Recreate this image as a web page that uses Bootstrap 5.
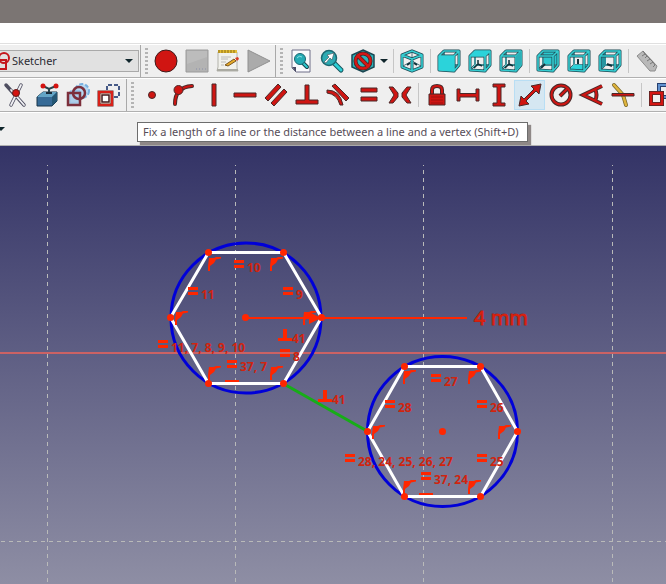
<!DOCTYPE html>
<html lang="en">
<head>
<meta charset="utf-8">
<meta name="viewport" content="width=device-width, initial-scale=1">
<title>Sketcher</title>
<link href="https://cdn.jsdelivr.net/npm/bootstrap@5.3.0/dist/css/bootstrap.min.css" rel="stylesheet">
<style>
body { font-family: "Noto Sans", sans-serif; font-size: 11px; background: #efefef; }
.title-strip { height: 23px; background: #7b7573; }
.menu-strip { height: 21px; border-bottom: 1px solid #e0e0e0; }
.tool-row { height: 34px; border-bottom: 1px solid #b0b0b0; border-top: 1px solid #fff; }
.tool-group { border-right: 1px solid #a9a9a9; margin-right: 1px; padding-right: 2px; }
.tool-group.tight { padding-right: 1px; }
.tool-group.open-end { border-right: 0; }
.grip { width: 3px; height: 26px; margin: 0 2px 0 3px; background: repeating-linear-gradient(#b4b4b4 0 2px, #efefef 2px 4px); }
.tool-btn { width: 31px; height: 30px; padding: 0; border: 1px solid transparent; border-radius: 0; background: none; }
.tool-btn svg { width: 24px; height: 24px; display: block; margin: 0 auto; overflow: visible; }
.tool-btn.hot, .tool-btn:hover { background: #d5e7f2; border-color: #b9def4; }
.menu-btn { width: 12px; height: 30px; padding: 0; border: 0; background: none; }
.sep { width: 1px; height: 24px; margin: 0 2px 0 3px; background: #c6c6c6; }
.caret { width: 8px; height: 4px; display: block; fill: #10262c; }
.bench { width: 139px; }
.bench select { height: 22px; padding: 0 20px 0 12px; border: 1px solid #a9a9a9; border-left: 0; background: #e1e1e1; color: #2b2b33; font-size: 11px; line-height: 18px; appearance: none; border-radius: 0; }
.bench .bench-icon { left: -8px; top: 2px; width: 18px; height: 18px; }
.bench .caret { right: 6px; top: 9px; }
.tip { left: 137px; top: 9px; height: 20px; line-height: 18px; padding: 0 8px 0 5px; border: 1px solid #6d6d6d; background: #fff; color: #574d58; box-shadow: 3px 3px 1px #8f8887; z-index: 2; }
.view3d { background: linear-gradient(#333366, #5f5f84 48%, #8e8ea4); min-height: 200px; }
.view3d > svg { display: block; width: 100%; height: 100%; min-height: 438px; }
.grid-line { stroke: #b9bab9; stroke-width: 1; stroke-dasharray: 4 4; fill: none; }
.notes { font: 700 12px "Noto Sans", sans-serif; fill: #d0240f; }
.dim-text { font: 400 20px "Noto Sans", sans-serif; fill: #d9220f; stroke: #b51d14; stroke-width: 1; paint-order: stroke; }
.red { fill: #cf1512; stroke: #4a2929; stroke-width: 1; stroke-linejoin: round; }
.out { fill: none; stroke: #4a2929; stroke-width: 4; }
.inn { fill: none; stroke: #cf1512; stroke-width: 2; }
</style>
<script src="https://cdn.jsdelivr.net/npm/bootstrap@5.3.0/dist/js/bootstrap.bundle.min.js"></script>
</head>
<body class="vh-100 d-flex flex-column overflow-hidden">
<svg width="0" height="0" class="position-absolute" aria-hidden="true">
  <defs>
    <path id="cubeBack" d="M7 16V2H22V16Z M2 21L7 16M16 21L22 16"/>
    <path id="cubeFront" d="M2 7H17V22L2 21ZM2 7L7 2H22L17 7M22 2V16L17 22"/>
    <g id="cubeFrameBack" fill="none"><use href="#cubeBack" stroke="#2a5560" stroke-width="2"/><use href="#cubeBack" stroke="#5fd0d3" stroke-width="1"/></g>
    <g id="cubeFrame" fill="none" stroke-linejoin="round"><use href="#cubeFront" stroke="#1f4a55" stroke-width="3"/><use href="#cubeFront" stroke="#35cdd1" stroke-width="1.600"/></g>
    <g id="axes" fill="none" stroke="#123038" stroke-width="1.5"><path d="M10 11V15L6 19M10 15L14 17"/></g>
    <g id="eq"><path d="M0 0H10V3H0ZM0 5H10V8H0Z"/></g>
    <g id="perp"><path d="M5 0H9V9H14V12H0V9H5Z"/></g>
    <g id="pt"><path d="M0 14V9L1 1L6 1L8 0H13V1.500L8 2.500L6 6L2 9V14Z"/></g>
    <path id="caretShape" d="M0 0H8L4 4Z"/>
  </defs>
</svg>

<header class="flex-shrink-0">
  <div class="title-strip"></div>
  <div class="menu-strip bg-white"></div>

  <div class="tool-row d-flex align-items-stretch overflow-hidden" role="toolbar" aria-label="File and view">
    <div class="tool-group tight d-flex align-items-center flex-shrink-0">
      <div class="bench position-relative">
        <select class="w-100 d-block" aria-label="Workbench"><option>Sketcher</option></select>
        <svg class="bench-icon position-absolute pe-none" viewBox="0 0 18 18" fill="none"><path d="M2 8H14V17H2Z" stroke="#c4161c" stroke-width="2"/><circle cx="12" cy="6" r="5" stroke="#c4161c" stroke-width="2"/></svg>
        <svg class="caret position-absolute pe-none" viewBox="0 0 8 4"><use href="#caretShape"/></svg>
      </div>
    </div>
    <div class="tool-group tight d-flex align-items-center flex-shrink-0">
      <div class="grip"></div>
      <button class="tool-btn" aria-label="Record macro"><svg viewBox="0 0 24 24"><circle cx="12" cy="12" r="11" fill="#d01512" stroke="#3c1c1c"/></svg></button>
      <button class="tool-btn" aria-label="Stop macro"><svg viewBox="0 0 24 24"><path d="M1 1H23V23H1Z" fill="#b3b3b3" stroke="#9a9a9a"/><path d="M2 15L22 8V2H2Z" fill="#bcbcbc"/><path d="M11 20H21" stroke="#8a8fa8" stroke-dasharray="1 2"/></svg></button>
      <button class="tool-btn" aria-label="Macros"><svg viewBox="0 0 24 24"><path d="M2 3H21V19L22 22H1L2 18Z" fill="#f1f1ec" stroke="#b2b2aa"/><path d="M1 20H22V22H1Z" fill="#aaaaa2"/><path d="M2 1H21V4H2Z" fill="#e3bd35"/><path d="M3 1V4M6 1V4M9 1V4M12 1V4M15 1V4M18 1V4" stroke="#8c6c12"/><path d="M5 8H15M5 10H12M5 13H10M5 16H8" stroke="#babab8"/><path d="M9 16L18 10L20 12L12 17Z" fill="#e7ab28" stroke="#7b5620"/><path d="M19 9L22 8L23 10L21 12Z" fill="#d93a24"/></svg></button>
      <button class="tool-btn" aria-label="Run macro"><svg viewBox="0 0 24 24"><path d="M1 1L23 12L1 23Z" fill="#ababab" stroke="#909090"/></svg></button>
    </div>
    <div class="tool-group open-end d-flex align-items-center flex-shrink-0">
      <div class="grip"></div>
      <button class="tool-btn" aria-label="Fit all"><svg viewBox="0 0 24 24"><path d="M3 1H21V23H7L3 19Z" fill="#fafafd" stroke="#6e6e88"/><path d="M3 18H7V23Z" fill="#4a4a62"/><path d="M13 13L18 18" stroke="#17444d" stroke-width="4" stroke-linecap="round"/><path d="M13 13L18 18" stroke="#2fc9cf" stroke-width="2" stroke-linecap="round"/><circle cx="11" cy="10" r="5.500" fill="#25abb5" stroke="#1b6771"/><path d="M8 9Q10 6 13 8" stroke="#8ce0e4" fill="none"/></svg></button>
      <button class="tool-btn" aria-label="Fit selection"><svg viewBox="0 0 24 24"><path d="M14 14L21 21" stroke="#17545c" stroke-width="5" stroke-linecap="round"/><path d="M14 14L21 21" stroke="#2fd0d6" stroke-width="3" stroke-linecap="round"/><circle cx="9" cy="9" r="7.500" fill="#2cabb3" stroke="#1b6771" stroke-width="1.500"/><path d="M4 13L9 8L7 6L14 4L12 11L10 9L6 14Z" fill="#fff" stroke="#4e6069" stroke-width=".7"/></svg></button>
      <button class="tool-btn" aria-label="Draw style"><svg viewBox="0 0 24 24"><path d="M12 1L23 6V18L12 23L1 18V6Z" fill="#2bb3ba" stroke="#1b4752" stroke-width="1.500"/><circle cx="12" cy="12" r="7.500" fill="none" stroke="#472323" stroke-width="4"/><path d="M7 7L17 17" stroke="#472323" stroke-width="4"/><circle cx="12" cy="12" r="7.500" fill="none" stroke="#d41716" stroke-width="2.500"/><path d="M7 7L17 17" stroke="#d41716" stroke-width="2.500"/></svg></button>
      <button class="menu-btn" aria-label="Draw style menu"><svg class="caret mx-auto" viewBox="0 0 8 4"><use href="#caretShape"/></svg></button>
      <div class="sep"></div>
      <button class="tool-btn" aria-label="Axonometric view"><svg viewBox="0 0 24 24" fill="none" stroke-linejoin="round"><path d="M12 12V2M12 12L3 17M12 12L21 17" stroke="#4b7a84" stroke-width="1"/><path d="M12 2L22 6V18L12 22L2 18V6ZM2 6L12 10L22 6M12 10V22" stroke="#1f4a55" stroke-width="3"/><path d="M12 2L22 6V18L12 22L2 18V6ZM2 6L12 10L22 6M12 10V22" stroke="#35cdd1" stroke-width="1.600"/><path d="M7 16L10 14M14 14L17 16" stroke="#123038" stroke-width="2"/></svg></button>
      <div class="sep"></div>
      <button class="tool-btn" aria-label="Front view"><svg viewBox="0 0 24 24"><use href="#cubeFrameBack"/><use href="#cubeFrame"/><path d="M2 7H17V22L2 21Z" fill="#2bd3da"/></svg></button>
      <button class="tool-btn" aria-label="Top view"><svg viewBox="0 0 24 24"><use href="#cubeFrameBack"/><use href="#cubeFrame"/><path d="M2 7L7 2H22L17 7Z" fill="#2bd3da"/><use href="#axes"/></svg></button>
      <button class="tool-btn" aria-label="Right view"><svg viewBox="0 0 24 24"><use href="#cubeFrameBack"/><use href="#cubeFrame"/><path d="M17 7L22 2V16L17 22Z" fill="#2bb0b8"/><use href="#axes"/></svg></button>
      <div class="sep"></div>
      <button class="tool-btn" aria-label="Rear view"><svg viewBox="0 0 24 24"><path d="M7 2H22V16H7Z" fill="#2bc8cf"/><use href="#cubeFrameBack"/><path d="M5 19L9 15" stroke="#123038" stroke-width="2"/><use href="#cubeFrame"/></svg></button>
      <button class="tool-btn" aria-label="Bottom view"><svg viewBox="0 0 24 24"><use href="#cubeFrameBack"/><path d="M2 21L7 16H22L17 22Z" fill="#2bd3da"/><path d="M11 10V15" stroke="#123038" stroke-width="2"/><use href="#cubeFrame"/></svg></button>
      <button class="tool-btn" aria-label="Left view"><svg viewBox="0 0 24 24"><use href="#cubeFrameBack"/><path d="M2 8L8 3V16L2 21Z" fill="#2594a0"/><path d="M9 15L14 17" stroke="#123038" stroke-width="2"/><use href="#cubeFrame"/></svg></button>
      <div class="sep"></div>
      <button class="tool-btn" aria-label="Measure distance"><svg viewBox="0 0 24 24"><path d="M2 7L8 2L22 17L20 22H15Z" fill="#b9b9b9" stroke="#8d8d8d"/><path d="M8 2L10 5L7 7M10 5L12 7L10 9M12 7L15 10L12 12M15 10L18 13L15 15M18 13L20 16L18 18" stroke="#777" fill="none"/></svg></button>
    </div>
  </div>

  <div class="tool-row d-flex align-items-stretch overflow-hidden" role="toolbar" aria-label="Sketcher tools">
    <div class="tool-group d-flex align-items-center flex-shrink-0">
      <button class="tool-btn" aria-label="Trim edge"><svg viewBox="0 0 24 24"><path d="M2 2L20 22M17 2L7 22" stroke="#4e4e60" stroke-width="3.500" stroke-linecap="round"/><path d="M7 7L20 22M17 2L7 22" stroke="#f1f1f4" stroke-width="1.800" stroke-linecap="round"/><circle cx="12" cy="10" r="3.500" fill="#d41310" stroke="#601c1c"/></svg></button>
      <button class="tool-btn" aria-label="External geometry"><svg viewBox="0 0 24 24"><path d="M2 14L8 9H22V18L17 23H2Z" fill="#376b97" stroke="#193549"/><path d="M2 14L8 9H22L17 14Z" fill="#63a5c6"/><path d="M17 14L22 9V18L17 23Z" fill="#245774"/><path d="M8 3L14 6L21 3M14 6V11" stroke="#28444c" stroke-width="2" fill="none"/><circle cx="8" cy="3" r="2.500" fill="#d41310"/><circle cx="21" cy="3" r="2.500" fill="#d41310"/><path d="M11 10H17" stroke="#182a38" stroke-width="2"/></svg></button>
      <button class="tool-btn" aria-label="Carbon copy"><svg viewBox="0 0 24 24"><circle cx="16" cy="8" r="7" fill="#b6d8f2" stroke="#79b1e0" stroke-width="2" stroke-dasharray="4 2"/><path d="M4 8H14V20H4Z" fill="#b6d8f2" stroke="#79b1e0"/><path d="M2 10H14V22H2Z" fill="#a9cbe6" fill-opacity=".7" stroke="#7c2f3b" stroke-width="2.500"/><circle cx="13" cy="10" r="6" fill="none" stroke="#7c2f3b" stroke-width="2.500"/></svg></button>
      <button class="tool-btn" aria-label="Construction mode"><svg viewBox="0 0 24 24" fill="none"><path d="M10 7V2H22V14H17" stroke="#465a87" stroke-width="2" stroke-dasharray="4 2"/><path d="M2 9H15V22H2Z" fill="#fff2df" stroke="#6d2020" stroke-width="3"/><path d="M2 9H15V22H2Z" stroke="#d92018" stroke-width="2"/><path d="M5 12H12V19H5Z" fill="#fff" stroke="#401b1f" stroke-width="1.500"/></svg></button>
    </div>
    <div class="tool-group open-end d-flex align-items-center flex-shrink-0">
      <div class="grip"></div>
      <button class="tool-btn" aria-label="Constrain coincident"><svg viewBox="0 0 24 24"><circle cx="12" cy="12" r="3.500" class="red"/></svg></button>
      <button class="tool-btn" aria-label="Constrain point on object"><svg viewBox="0 0 24 24"><path class="out" d="M4 21Q4 4 21 3" stroke-linecap="round"/><path class="inn" d="M4 21Q4 4 21 3" stroke-linecap="round"/><circle cx="7.500" cy="7" r="4.500" class="red"/></svg></button>
      <button class="tool-btn" aria-label="Constrain vertical"><svg viewBox="0 0 24 24"><path class="red" d="M10 1H14V23H10Z"/></svg></button>
      <button class="tool-btn" aria-label="Constrain horizontal"><svg viewBox="0 0 24 24"><path class="red" d="M1 10H23V14H1Z"/></svg></button>
      <button class="tool-btn" aria-label="Constrain parallel"><svg viewBox="0 0 24 24"><path class="red" d="M1 15L14 1L17 4L4 18ZM7 20L20 6L23 9L10 23Z"/></svg></button>
      <button class="tool-btn" aria-label="Constrain perpendicular"><svg viewBox="0 0 24 24"><path class="red" d="M10 2H14V17H23V21H1V17H10Z"/></svg></button>
      <button class="tool-btn" aria-label="Constrain tangent"><svg viewBox="0 0 24 24"><path class="red" d="M1 7Q14 7 17 22L14 22Q11 11 1 10Z"/><path class="red" d="M6 3L9 1L23 15L20 18Z"/></svg></button>
      <button class="tool-btn" aria-label="Constrain equal"><svg viewBox="0 0 24 24"><path class="red" d="M4 5H20V9H4ZM4 14H20V18H4Z"/></svg></button>
      <button class="tool-btn" aria-label="Constrain symmetric"><svg viewBox="0 0 24 24"><path class="red" d="M1 4H5L10 10V14L5 20H1L6 12ZM23 4H19L14 10V14L19 20H23L18 12Z"/></svg></button>
      <div class="sep"></div>
      <button class="tool-btn" aria-label="Constrain lock"><svg viewBox="0 0 24 24"><path class="out" d="M7 12V7Q7 3 12 3T17 7V12"/><path class="inn" d="M7 12V7Q7 3 12 3T17 7V12"/><path class="red" d="M4 11H20V22H4Z"/><path d="M6 14H18M6 17H18M6 20H18" stroke="#a01010"/></svg></button>
      <button class="tool-btn" aria-label="Constrain horizontal distance"><svg viewBox="0 0 24 24"><path class="red" d="M1 6H4V10.500H20V6H23V18H20V14H4V18H1Z"/></svg></button>
      <button class="tool-btn" aria-label="Constrain vertical distance"><svg viewBox="0 0 24 24"><path class="red" d="M6 1H18V4H14V20H18V23H6V20H10V4H6Z"/></svg></button>
      <button class="tool-btn hot" aria-label="Constrain distance" aria-describedby="distanceTip"><svg viewBox="0 0 24 24"><path class="red" d="M23 1L21 11L18 8L8 18L11 21L1 23L3 13L6 16L16 6L13 3Z"/></svg></button>
      <button class="tool-btn" aria-label="Constrain radius"><svg viewBox="0 0 24 24"><circle class="out" cx="12" cy="12" r="9.500"/><path class="out" d="M11 13L18 6"/><circle class="inn" cx="12" cy="12" r="9.500"/><path class="inn" d="M11 13L18 6"/></svg></button>
      <button class="tool-btn" aria-label="Constrain angle"><svg viewBox="0 0 24 24"><path class="out" d="M22 3L3 12L22 21M15 6Q18 12 15 18"/><path class="inn" d="M22 3L3 12L22 21M15 6Q18 12 15 18"/></svg></button>
      <button class="tool-btn" aria-label="Constrain refraction"><svg viewBox="0 0 24 24"><path d="M3 2L12 12L15 22" fill="none" stroke="#76652b" stroke-width="4" stroke-linecap="round"/><path d="M3 2L12 12L15 22" fill="none" stroke="#deb33c" stroke-width="2.500" stroke-linecap="round"/><path class="red" d="M1 10.500H23V13H1Z"/></svg></button>
      <div class="sep"></div>
      <button class="tool-btn" aria-label="Toggle driving constraint"><svg viewBox="0 0 24 24" fill="none"><path d="M11 2H23V14H11Z" stroke="#27406f" stroke-width="4"/><path d="M11 2H23V14H11Z" stroke="#6292cf" stroke-width="2"/><path d="M3 10H14V21H3Z" fill="#efefef" stroke="#4a2929" stroke-width="4"/><path d="M3 10H14V21H3Z" stroke="#d41512" stroke-width="2.500"/></svg></button>
    </div>
  </div>

  <div class="tool-row position-relative d-flex align-items-center">
    <button class="menu-btn overflow-hidden" aria-label="More options"><svg class="caret" viewBox="3 0 8 4"><use href="#caretShape"/></svg></button>
    <div id="distanceTip" class="tip position-absolute text-nowrap" role="tooltip">Fix a length of a line or the distance between a line and a vertex (Shift+D)</div>
  </div>
</header>

<main class="view3d flex-grow-1 overflow-hidden">
  <svg role="img" aria-label="Sketch view">
    <g transform="translate(0 -146)">
      <path class="grid-line" stroke-dashoffset="3" d="M47.500 165V3000M235.500 165V3000M423.500 165V3000M612.500 165V3000"/>
      <path class="grid-line" stroke-dashoffset="7" d="M0 541.500H4000"/>
      <path d="M0 353H4000" stroke="#cb6264" stroke-width="2"/>
      <g fill="none" stroke="#0000d8" stroke-width="3">
        <circle cx="246" cy="318" r="75"/>
        <circle cx="442.500" cy="431.500" r="75"/>
      </g>
      <path d="M284 384L367 431" stroke="#17ad17" stroke-width="3"/>
      <g fill="none" stroke="#fff" stroke-width="3">
        <path d="M208.500 252.500H283.500L321.500 317.500L283.500 383.500H208.500L170.500 317.500Z"/>
        <path d="M404.500 366.500H480.500L517.500 431.500L480.500 496.500H404.500L367.500 431.500Z"/>
      </g>
      <g fill="#ff2600">
        <path d="M245 317H467V319H245ZM309 312L321 318L309 324Z"/>
        <circle cx="208.500" cy="252.500" r="3.500"/><circle cx="283.500" cy="252.500" r="3.500"/><circle cx="321.500" cy="317.500" r="3.500"/><circle cx="283.500" cy="383.500" r="3.500"/><circle cx="208.500" cy="383.500" r="3.500"/><circle cx="170.500" cy="317.500" r="3.500"/><circle cx="245.500" cy="317.500" r="3.500"/>
        <circle cx="404.500" cy="366.500" r="3.500"/><circle cx="480.500" cy="366.500" r="3.500"/><circle cx="517.500" cy="431.500" r="3.500"/><circle cx="480.500" cy="496.500" r="3.500"/><circle cx="404.500" cy="496.500" r="3.500"/><circle cx="367.500" cy="431.500" r="3.500"/><circle cx="442.500" cy="431.500" r="3.500"/>
        <use href="#eq" x="234" y="260"/><use href="#eq" x="188" y="287"/><use href="#eq" x="283" y="287"/><use href="#eq" x="158" y="340"/><use href="#eq" x="280" y="349"/><use href="#eq" x="227" y="360"/>
        <use href="#eq" x="431" y="374"/><use href="#eq" x="385" y="400"/><use href="#eq" x="477" y="400"/><use href="#eq" x="477" y="454"/><use href="#eq" x="345" y="454"/><use href="#eq" x="421" y="472"/>
        <use href="#pt" x="208" y="257"/><use href="#pt" x="270" y="257"/><use href="#pt" x="175" y="311"/><use href="#pt" x="303" y="311"/><use href="#pt" x="208" y="366"/><use href="#pt" x="270" y="366"/>
        <use href="#pt" x="403" y="370"/><use href="#pt" x="468" y="370"/><use href="#pt" x="372" y="425"/><use href="#pt" x="498" y="425"/><use href="#pt" x="403" y="480"/><use href="#pt" x="468" y="480"/>
        <use href="#perp" x="278" y="329"/><use href="#perp" x="318" y="390"/>
        <path d="M225 380H239V382H225ZM419 493H433V495H419Z"/>
      </g>
      <g class="notes">
        <text x="247" y="272">10</text><text x="201" y="299">11</text><text x="296" y="299">9</text><text x="171" y="352">11, 7, 8, 9, 10</text><text x="293" y="361">8</text><text x="240" y="371">37, 7</text><text x="292" y="343">41</text><text x="332" y="404">41</text>
        <text x="444" y="386">27</text><text x="398" y="412">28</text><text x="490" y="412">26</text><text x="490" y="466">25</text><text x="358" y="466">28, 24, 25, 26, 27</text><text x="434" y="484">37, 24</text>
      </g>
      <text class="dim-text" x="474" y="325">4 mm</text>
    </g>
  </svg>
</main>
</body>
</html>
